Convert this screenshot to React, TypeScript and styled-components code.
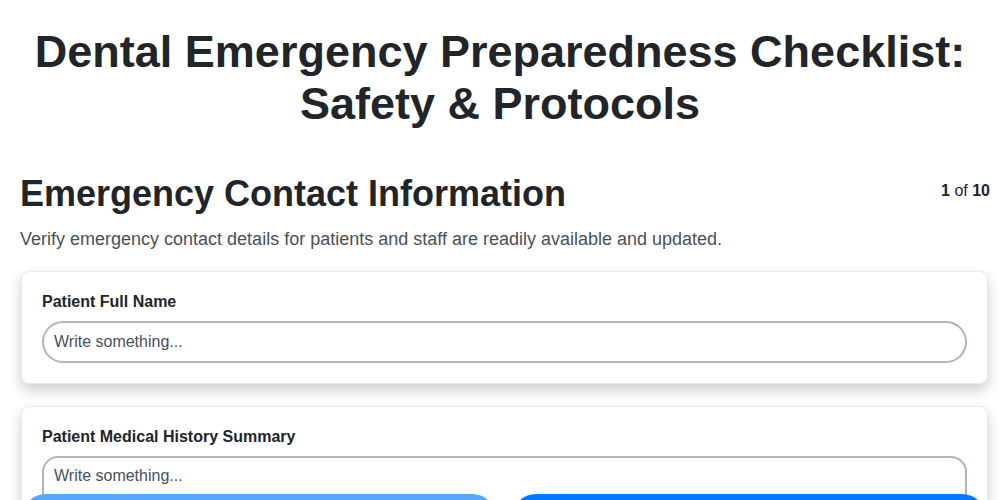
import { FC } from 'react';
import styled, { createGlobalStyle } from 'styled-components';

const GlobalStyle = createGlobalStyle`
  * {
    box-sizing: border-box;
  }

  body {
    margin: 0;
    background: #fff;
    color: #212529;
    font-family: 'Liberation Sans', Arial, sans-serif;
  }
`;

type Field = {
  label: string;
  multiline?: boolean;
};

const fields: Field[] = [
  { label: 'Patient Full Name' },
  { label: 'Patient Medical History Summary', multiline: true },
  { label: 'Emergency Contact Name' },
  { label: 'Emergency Contact Phone' },
];

const App: FC = () => {
  return (
    <>
      <GlobalStyle />
      <Title>Dental Emergency Preparedness Checklist: Safety &amp; Protocols</Title>
      <Page>
        <SectionHeader>
          <SectionTitle>Emergency Contact Information</SectionTitle>
          <Counter>
            <b>1</b> of <b>10</b>
          </Counter>
        </SectionHeader>
        <Description>
          Verify emergency contact details for patients and staff are readily available and
          updated.
        </Description>
        <Fields>
          {fields.map((field) => (
            <Card key={field.label}>
              <Label>{field.label}</Label>
              {field.multiline ? (
                <TextArea placeholder="Write something..." rows={4} />
              ) : (
                <Input placeholder="Write something..." />
              )}
            </Card>
          ))}
        </Fields>
      </Page>
      <Footer>
        <NavButton $muted>Previous</NavButton>
        <NavButton>Next</NavButton>
      </Footer>
    </>
  );
};

export default App;

const Title = styled.h1`
  margin: 0;
  padding: 26px 20px 0;
  font-size: 45px;
  line-height: 52px;
  font-weight: 700;
  text-align: center;
  color: #212529;
`;

const Page = styled.section`
  margin-top: 42px;
  padding: 0 12px 120px 20px;
`;

const SectionHeader = styled.div`
  display: flex;
  justify-content: space-between;
  align-items: flex-start;
`;

const SectionTitle = styled.h2`
  margin: 0;
  font-size: 36px;
  line-height: 44px;
  font-weight: 700;
  color: #212529;
`;

const Counter = styled.div`
  margin-top: 10px;
  margin-right: -2px;
  font-size: 16px;
  color: #212529;

  b {
    font-weight: 700;
  }
`;

const Description = styled.p`
  margin: 11px 0 0;
  font-size: 18px;
  line-height: 24px;
  color: #495057;
`;

const Fields = styled.div`
  display: flex;
  flex-direction: column;
  gap: 22px;
  margin-top: 20px;
`;

const Card = styled.div`
  display: flex;
  flex-direction: column;
  gap: 9px;
  margin-left: 1px;
  padding: 20px;
  border: 1px solid #e9e9ef;
  border-radius: 8px;
  background: #fff;
  box-shadow: 0 6px 14px rgba(0, 0, 0, 0.2);
`;

const Label = styled.label`
  font-size: 16px;
  line-height: 20px;
  font-weight: 700;
  color: #212529;
`;

const Input = styled.input`
  width: 100%;
  height: 42px;
  padding: 0 10px;
  border: 2px solid #adb5bd;
  border-radius: 21px;
  font-family: inherit;
  font-size: 16px;
  color: #212529;
  outline: none;

  &::placeholder {
    color: #495057;
  }
`;

const TextArea = styled.textarea`
  width: 100%;
  padding: 8px 10px;
  border: 2px solid #adb5bd;
  border-radius: 16px;
  font-family: inherit;
  font-size: 16px;
  line-height: 20px;
  color: #212529;
  resize: none;
  outline: none;

  &::placeholder {
    color: #495057;
  }
`;

const Footer = styled.div`
  position: fixed;
  left: 0;
  right: 0;
  bottom: 0;
  height: 6px;
  display: flex;
  gap: 16px;
  padding: 0 14px 0 22px;
  overflow: hidden;
`;

const NavButton = styled.button<{ $muted?: boolean }>`
  flex: 1;
  height: 48px;
  border: none;
  border-radius: 24px;
  background: ${({ $muted }) => ($muted ? '#55a7fb' : '#007bff')};
  color: #fff;
  font-family: inherit;
  font-size: 16px;
  font-weight: 700;
`;
